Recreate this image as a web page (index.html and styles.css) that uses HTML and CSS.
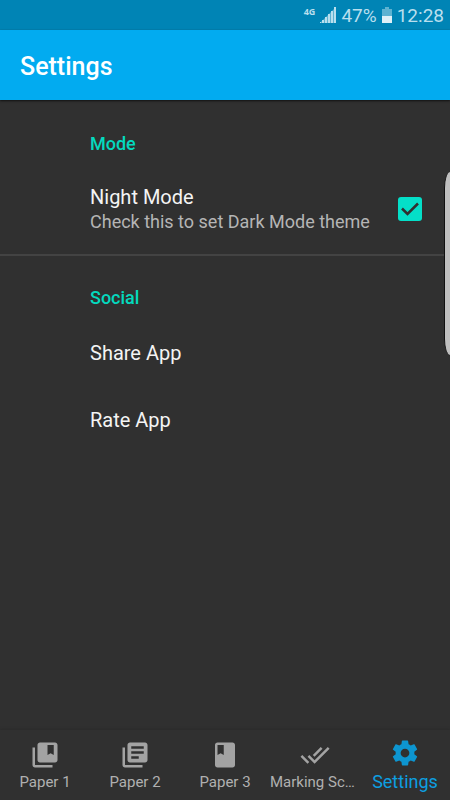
FILE: index.html
```html
<!DOCTYPE html>
<html lang="en">
<head>
<meta charset="utf-8">
<meta name="viewport" content="width=device-width, initial-scale=1">
<title>Settings</title>
<link rel="stylesheet" href="styles.css">
</head>
<body>
<div class="app">
  <div class="status">
    <span class="network">4G</span>
    <svg class="signal" viewBox="0 0 16 16" aria-hidden="true"><path class="signal-fill" d="M0 16L16 0v16z"/><path d="M0 15h1v1H0zM2 13h2v3H2zM5 10h2v6H5zM8 7h2v9H8zM11 4h2v12h-2zM14 0h2v16h-2z"/></svg>
    <span class="percent">47%</span>
    <svg class="battery" viewBox="0 0 10 16" aria-hidden="true"><path class="battery-shell" d="M3 0h4v2h3v7H0V2h3z"/><path class="battery-level" d="M0 9h10v7H0z"/></svg>
    <time>12:28</time>
  </div>
  <header class="bar"><h1>Settings</h1></header>
  <main>
    <section class="group">
      <h2>Mode</h2>
      <label class="row row-check">
        <span class="row-text">
          <span class="row-title">Night Mode</span>
          <span class="row-summary">Check this to set Dark Mode theme</span>
        </span>
        <span class="check">
          <input type="checkbox" checked>
          <svg viewBox="0 0 24 24" aria-hidden="true"><path d="M4 11.500l5.500 5.500L20 6.500"/></svg>
        </span>
      </label>
    </section>
    <section class="group">
      <h2>Social</h2>
      <button class="row" type="button">Share App</button>
      <button class="row" type="button">Rate App</button>
    </section>
  </main>
  <nav class="tabs">
    <a class="tab" href="#paper1">
      <svg viewBox="0 0 24 24" aria-hidden="true"><path d="M4 6H2v14c0 1.100.9 2 2 2h14v-2H4V6z"/><path fill-rule="evenodd" d="M20 2H8c-1.100 0-2 .9-2 2v12c0 1.100.9 2 2 2h12c1.100 0 2-.9 2-2V4c0-1.100-.9-2-2-2zM19 12l-2.500-1.500L14 12V4h5z"/></svg>
      <span>Paper 1</span>
    </a>
    <a class="tab" href="#paper2">
      <svg viewBox="0 0 24 24" aria-hidden="true"><path d="M4 6H2v14c0 1.100.9 2 2 2h14v-2H4V6z"/><path d="M20 2H8c-1.100 0-2 .9-2 2v12c0 1.100.9 2 2 2h12c1.100 0 2-.9 2-2V4c0-1.100-.9-2-2-2zm-1 9H9V9h10v2zm-4 4H9v-2h6v2zm4-8H9V5h10v2z"/></svg>
      <span>Paper 2</span>
    </a>
    <a class="tab" href="#paper3">
      <svg viewBox="0 0 24 24" aria-hidden="true"><path d="M18 2H6c-1.100 0-2 .9-2 2v16c0 1.100.9 2 2 2h12c1.100 0 2-.9 2-2V4c0-1.100-.9-2-2-2zM6 4h5v8l-2.500-1.500L6 12V4z"/></svg>
      <span>Paper 3</span>
    </a>
    <a class="tab" href="#marking">
      <svg viewBox="0 0 24 24" aria-hidden="true"><path d="M18 7l-1.410-1.410-6.340 6.340 1.410 1.410L18 7zm4.240-1.410L11.660 16.170 7.480 12l-1.410 1.410L11.660 19l12-12-1.420-1.410zM.41 13.410L6 19l1.410-1.410L1.830 12 .41 13.410z"/></svg>
      <span>Marking Scheme</span>
    </a>
    <a class="tab active" href="#settings" aria-current="page">
      <svg viewBox="0 0 24 24" aria-hidden="true"><path d="M19.430 12.980c.04-.32.07-.64.07-.98s-.03-.66-.07-.98l2.110-1.650c.19-.15.24-.42.12-.64l-2-3.460c-.12-.22-.39-.3-.61-.22l-2.490 1c-.52-.4-1.080-.73-1.690-.98l-.38-2.650C14.460 2.180 14.250 2 14 2h-4c-.25 0-.46.18-.49.42l-.38 2.650c-.61.25-1.170.59-1.690.98l-2.490-1c-.23-.09-.49 0-.61.22l-2 3.460c-.13.22-.07.49.12.64l2.110 1.650c-.04.32-.07.65-.07.98s.03.66.07.98l-2.110 1.650c-.19.15-.24.42-.12.64l2 3.460c.12.22.39.3.61.22l2.490-1c.52.4 1.080.73 1.690.98l.38 2.650c.03.24.24.42.49.42h4c.25 0 .46-.18.49-.42l.38-2.650c.61-.25 1.170-.59 1.690-.98l2.490 1c.23.09.49 0 .61-.22l2-3.460c.12-.22.07-.49-.12-.64l-2.110-1.650zM12 15.500c-1.930 0-3.500-1.570-3.500-3.500s1.570-3.500 3.500-3.500 3.500 1.570 3.500 3.500-1.570 3.500-3.500 3.500z"/></svg>
      <span>Settings</span>
    </a>
  </nav>
  <div class="edge-handle"></div>
</div>
</body>
</html>
```
FILE: styles.css
```css
* { box-sizing: border-box; }

body {
  margin: 0;
  background: #303030;
  color: #fff;
  font-family: Roboto, "Liberation Sans", sans-serif;
}

.app {
  position: relative;
  display: flex;
  flex-direction: column;
  min-height: 100vh;
}

.status {
  display: flex;
  align-items: center;
  justify-content: flex-end;
  gap: 5px;
  height: 30px;
  padding: 0 6px;
  background: #0084b5;
  color: #b9dfee;
  font-size: 19px;
}
.status svg { fill: currentColor; }
.network {
  align-self: flex-start;
  padding-top: 6px;
  font: bold 9px/12px "Noto Sans", sans-serif;
}
.signal { width: 16px; height: 16px; }
.signal-fill { opacity: .5; }
.battery { width: 10px; height: 16px; }
.battery-shell { opacity: .5; }
.battery-level { fill: #dff0f7; }

.bar {
  display: flex;
  align-items: center;
  height: 70px;
  padding: 2px 20px 0;
  background: #02abf0;
  box-shadow: 0 1px 2px #111;
}
h1 { margin: 0; font-size: 25px; font-weight: 500; }

main { flex: 1; padding-top: 2px; }
.group { padding: 19px 0 9px; }
.group + .group { border-top: 2px solid #434343; }
h2 {
  margin: 0;
  padding: 12px 20px 11px 90px;
  color: #04d9be;
  font-size: 18px;
  font-weight: 500;
  line-height: 21px;
}
.row {
  display: flex;
  align-items: center;
  width: 100%;
  min-height: 67px;
  margin: 0;
  padding: 0 28px 0 90px;
  border: 0;
  background: none;
  color: #f4f4f4;
  font: 20px/26px Roboto, "Liberation Sans", sans-serif;
  text-align: left;
}
.row-check { min-height: 80px; padding-top: 8px; }
.row-text { flex: 1; }
.row-title, .row-summary { display: block; }
.row-summary { color: #b5b5b5; font-size: 18px; line-height: 24px; }

.check { position: relative; width: 24px; height: 24px; }
.check input {
  display: block;
  width: 24px;
  height: 24px;
  margin: 0;
  appearance: none;
  border-radius: 3px;
  background: #555;
}
.check input:checked { background: #04dfc8; }
.check svg {
  position: absolute;
  inset: 0;
  fill: none;
  stroke: #303030;
  stroke-width: 2.500;
  pointer-events: none;
}

.tabs {
  display: grid;
  grid-template-columns: repeat(5, 1fr);
  height: 70px;
  box-shadow: 0 -1px 2px #2b2b2b;
}
.tab {
  display: flex;
  flex-direction: column;
  align-items: center;
  gap: 2px;
  min-width: 0;
  padding: 10px 0 0;
  color: #b0b0b0;
  font-size: 15px;
  line-height: 20px;
  text-decoration: none;
}
.tab svg { width: 30px; height: 30px; fill: #a3a3a3; }
.tab span {
  max-width: 100%;
  overflow: hidden;
  text-overflow: ellipsis;
  white-space: nowrap;
}
.tab.active { padding-top: 8px; color: #0d9fe0; font-size: 18px; gap: 4px; }
.tab.active svg { fill: #0d95d0; }

.edge-handle {
  position: absolute;
  top: 172px;
  right: 0;
  width: 6px;
  height: 183px;
  border-left: 1px solid #111;
  border-radius: 6px 0 0 6px / 16px 0 0 16px;
  background: #bfbfbf;
}
```
